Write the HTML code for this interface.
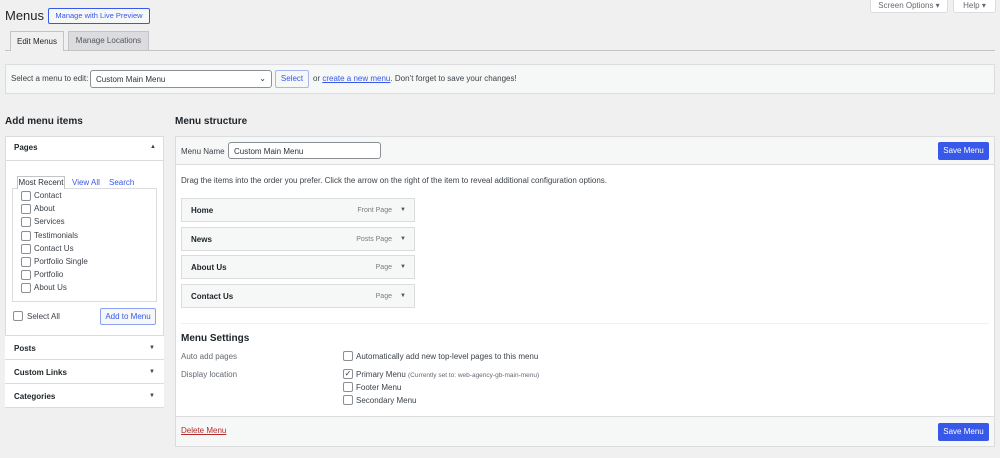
<!DOCTYPE html>
<html><head><meta charset="utf-8"><style>
*{box-sizing:border-box;margin:0;padding:0}
body{width:1000px;height:458px;background:#f0f0f1;font-family:"Liberation Sans",sans-serif;font-size:8px;color:#3c434a;position:relative;overflow:hidden}
.a{position:absolute}
.cb{position:absolute;width:10px;height:10px;border:1px solid #8c8f94;border-radius:2px;background:#fff}
.btn{position:absolute;border:1px solid #3858e9;color:#3858e9;background:#f6f7f7;border-radius:2px;text-align:center}
.blue{position:absolute;background:#3858e9;color:#fff;border-radius:2px;text-align:center;font-size:8px}
.item{position:absolute;left:181px;width:234px;height:24px;border:1px solid #dcdcde;background:#f6f7f7}
.item b{position:absolute;left:9px;top:7px;font-weight:600;color:#1d2327}
.item span{position:absolute;right:22px;top:8px;color:#787c82;font-size:7px}
.item i{position:absolute;right:8px;top:8px;font-style:normal;font-size:6px;color:#50575e}
.row{position:absolute;left:5px;width:159px;height:24px;border-top:1px solid #dcdcde;background:#fff}
.row b{position:absolute;left:9px;top:8px;font-weight:600;color:#1d2327}
.row i{position:absolute;right:9px;top:9px;font-style:normal;font-size:6px}
</style></head><body>
<div class="a" style="left:5px;top:8px;font-size:13px;color:#1d2327">Menus</div>
<div class="btn" style="left:48px;top:8px;width:102px;height:16px;line-height:14px;font-size:7.5px">Manage with Live Preview</div>
<div class="a" style="left:870px;top:-2px;width:78px;height:15px;background:#fff;border:1px solid #dcdcde;border-radius:0 0 3px 3px;text-align:center;line-height:13px;color:#646970">Screen Options ▾</div>
<div class="a" style="left:953px;top:-2px;width:43px;height:15px;background:#fff;border:1px solid #dcdcde;border-radius:0 0 3px 3px;text-align:center;line-height:13px;color:#646970">Help ▾</div>
<div class="a" style="left:5px;top:50px;width:990px;height:1px;background:#c3c4c7"></div>
<div class="a" style="left:10px;top:31px;width:54px;height:20px;background:#f0f0f1;border:1px solid #c3c4c7;border-bottom:none;text-align:center;line-height:19px;color:#1d2327">Edit Menus</div>
<div class="a" style="left:68px;top:31px;width:81px;height:19px;background:#dcdcde;border:1px solid #c3c4c7;border-bottom:none;text-align:center;line-height:18px;color:#50575e">Manage Locations</div>
<div class="a" style="left:5px;top:64px;width:990px;height:30px;background:#f6f7f7;border:1px solid #dcdcde"></div>
<div class="a" style="left:11px;top:74px">Select a menu to edit:</div>
<div class="a" style="left:90px;top:70px;width:182px;height:18px;background:#fff;border:1px solid #8c8f94;border-radius:3px;padding:4px 5px;color:#2c3338">Custom Main Menu<span style="position:absolute;right:5px;top:3px">⌄</span></div>
<div class="btn" style="left:275px;top:70px;width:34px;height:18px;line-height:16px;border-color:#a7b5f3">Select</div>
<div class="a" style="left:313px;top:74px">or <span style="color:#3858e9;text-decoration:underline">create a new menu</span>. Don’t forget to save your changes!</div>
<div class="a" style="left:5px;top:116px;font-size:10px;font-weight:600;color:#1d2327">Add menu items</div>
<div class="a" style="left:175px;top:116px;font-size:10px;font-weight:600;color:#1d2327">Menu structure</div>
<!-- left -->
<div class="a" style="left:5px;top:136px;width:159px;height:272px;background:#fff;border:1px solid #dcdcde"></div>
<div class="a" style="left:14px;top:143px;font-weight:600;color:#1d2327">Pages</div>
<div class="a" style="left:150px;top:144px;font-size:6px">▲</div>
<div class="a" style="left:6px;top:160px;width:157px;height:1px;background:#dcdcde"></div>
<div class="a" style="left:12px;top:188px;width:145px;height:114px;border:1px solid #dcdcde"></div>
<div class="a" style="left:17px;top:176px;width:48px;height:13px;background:#fff;border:1px solid #c3c4c7;border-bottom:none;text-align:center;line-height:12px;color:#2c3338">Most Recent</div>
<div class="a" style="left:72px;top:178px;color:#3858e9">View All</div>
<div class="a" style="left:109px;top:178px;color:#3858e9">Search</div>
<div class="cb" style="left:21px;top:191px"></div><div class="a" style="left:34px;top:191px">Contact</div>
<div class="cb" style="left:21px;top:204px"></div><div class="a" style="left:34px;top:204px">About</div>
<div class="cb" style="left:21px;top:217px"></div><div class="a" style="left:34px;top:217px">Services</div>
<div class="cb" style="left:21px;top:231px"></div><div class="a" style="left:34px;top:231px">Testimonials</div>
<div class="cb" style="left:21px;top:244px"></div><div class="a" style="left:34px;top:244px">Contact Us</div>
<div class="cb" style="left:21px;top:257px"></div><div class="a" style="left:34px;top:257px">Portfolio Single</div>
<div class="cb" style="left:21px;top:270px"></div><div class="a" style="left:34px;top:270px">Portfolio</div>
<div class="cb" style="left:21px;top:283px"></div><div class="a" style="left:34px;top:283px">About Us</div>
<div class="cb" style="left:13px;top:311px"></div><div class="a" style="left:27px;top:312px">Select All</div>
<div class="btn" style="left:100px;top:308px;width:56px;height:17px;line-height:15px;border-color:#8ea0f0">Add to Menu</div>
<div class="row" style="top:335px"><b>Posts</b><i>▼</i></div>
<div class="row" style="top:359px"><b>Custom Links</b><i>▼</i></div>
<div class="row" style="top:383px;height:24px"><b>Categories</b><i>▼</i></div>
<!-- right -->
<div class="a" style="left:175px;top:136px;width:820px;height:311px;background:#fff;border:1px solid #dcdcde"></div>
<div class="a" style="left:176px;top:137px;width:818px;height:28px;background:#f6f7f7;border-bottom:1px solid #dcdcde"></div>
<div class="a" style="left:181px;top:147px">Menu Name</div>
<div class="a" style="left:228px;top:142px;width:153px;height:17px;background:#fff;border:1px solid #8c8f94;border-radius:3px;padding:4px 5px;color:#2c3338">Custom Main Menu</div>
<div class="blue" style="left:938px;top:142px;width:51px;height:18px;line-height:18px">Save Menu</div>
<div class="a" style="left:181px;top:176px">Drag the items into the order you prefer. Click the arrow on the right of the item to reveal additional configuration options.</div>
<div class="item" style="top:198px"><b>Home</b><span>Front Page</span><i>▼</i></div>
<div class="item" style="top:227px"><b>News</b><span>Posts Page</span><i>▼</i></div>
<div class="item" style="top:255px"><b>About Us</b><span>Page</span><i>▼</i></div>
<div class="item" style="top:284px"><b>Contact Us</b><span>Page</span><i>▼</i></div>
<div class="a" style="left:181px;top:323px;width:808px;height:1px;background:#f0f0f1"></div>
<div class="a" style="left:181px;top:333px;font-size:10px;font-weight:600;color:#1d2327">Menu Settings</div>
<div class="a" style="left:181px;top:352px;color:#646970">Auto add pages</div>
<div class="a" style="left:181px;top:370px;color:#646970">Display location</div>
<div class="cb" style="left:343px;top:351px"></div><div class="a" style="left:356px;top:352px">Automatically add new top-level pages to this menu</div>
<div class="cb" style="left:343px;top:369px;color:#2c3338;font-size:8px;line-height:8px;text-align:center">✓</div><div class="a" style="left:356px;top:370px">Primary Menu <span style="font-size:6.5px;color:#646970">(Currently set to: web-agency-gb-main-menu)</span></div>
<div class="cb" style="left:343px;top:382px"></div><div class="a" style="left:356px;top:383px">Footer Menu</div>
<div class="cb" style="left:343px;top:395px"></div><div class="a" style="left:356px;top:396px">Secondary Menu</div>
<div class="a" style="left:176px;top:416px;width:818px;height:30px;background:#f6f7f7;border-top:1px solid #dcdcde"></div>
<div class="a" style="left:181px;top:426px;color:#b32d2e;text-decoration:underline">Delete Menu</div>
<div class="blue" style="left:938px;top:423px;width:51px;height:18px;line-height:18px">Save Menu</div>
</body></html>
